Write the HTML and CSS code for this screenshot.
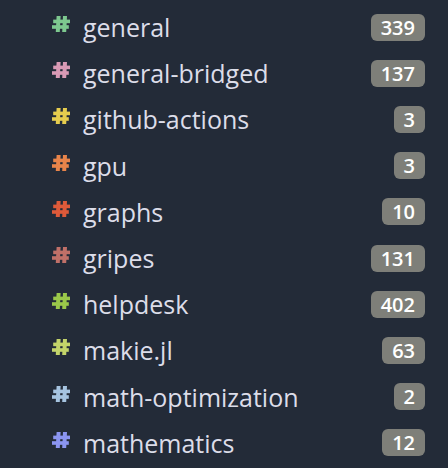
FILE: index.html
```html
<!DOCTYPE html>
<html>
<head>
<meta charset="utf-8">
<link rel="stylesheet" href="styles.css">
</head>
<body>
<ul class="channels">
  <li class="row"><svg class="hash c1" viewBox="0 0 18 16"><use href="#h"/></svg><span class="name">general</span><span class="badge">339</span></li>
  <li class="row"><svg class="hash c2" viewBox="0 0 18 16"><use href="#h"/></svg><span class="name">general-bridged</span><span class="badge">137</span></li>
  <li class="row"><svg class="hash c3" viewBox="0 0 18 16"><use href="#h"/></svg><span class="name">github-actions</span><span class="badge">3</span></li>
  <li class="row"><svg class="hash c4" viewBox="0 0 18 16"><use href="#h"/></svg><span class="name">gpu</span><span class="badge">3</span></li>
  <li class="row"><svg class="hash c5" viewBox="0 0 18 16"><use href="#h"/></svg><span class="name">graphs</span><span class="badge">10</span></li>
  <li class="row"><svg class="hash c6" viewBox="0 0 18 16"><use href="#h"/></svg><span class="name">gripes</span><span class="badge">131</span></li>
  <li class="row"><svg class="hash c7" viewBox="0 0 18 16"><use href="#h"/></svg><span class="name">helpdesk</span><span class="badge">402</span></li>
  <li class="row"><svg class="hash c8" viewBox="0 0 18 16"><use href="#h"/></svg><span class="name">makie.jl</span><span class="badge">63</span></li>
  <li class="row"><svg class="hash c9" viewBox="0 0 18 16"><use href="#h"/></svg><span class="name">math-optimization</span><span class="badge">2</span></li>
  <li class="row"><svg class="hash c10" viewBox="0 0 18 16"><use href="#h"/></svg><span class="name">mathematics</span><span class="badge">12</span></li>
</ul>
<svg class="defs" width="0" height="0">
  <defs>
    <g id="h" fill="currentColor">
      <polygon points="4.6,0 8.6,0 7.8,16 3.8,16"/>
      <polygon points="11,0 15,0 14.2,16 10.2,16"/>
      <rect x="1.2" y="3.6" width="16.8" height="3.6"/>
      <rect x="0" y="9.2" width="16.8" height="3.6"/>
    </g>
  </defs>
</svg>
</body>
</html>
```
FILE: styles.css
```css
html, body {
  margin: 0;
  padding: 0;
  background: #232b38;
  width: 448px;
  height: 468px;
  overflow: hidden;
}
.defs {
  position: absolute;
}
.channels {
  list-style: none;
  margin: 0;
  padding: 4px 23px 0 52px;
  font-family: "Open Sans", sans-serif;
}
.row {
  display: flex;
  align-items: center;
  height: 46.2px;
}
.hash {
  width: 18px;
  height: 16px;
  margin-right: 13px;
  margin-bottom: 6px;
  flex: none;
}
.name {
  flex: 1;
  color: #dcdde9;
  font-size: 25px;
  font-weight: 500;
  line-height: 1;
  margin-top: 1px;
}
.badge {
  background: #7e7f79;
  color: #ffffff;
  font-size: 20px;
  font-weight: 600;
  height: 27px;
  line-height: 27px;
  min-width: 8px;
  padding: 0 10px;
  border-radius: 6px;
  text-align: center;
}
.c1 { color: #7dc88f; }
.c2 { color: #d99ab5; }
.c3 { color: #e6cd4e; }
.c4 { color: #e8844a; }
.c5 { color: #de5a3a; }
.c6 { color: #c07068; }
.c7 { color: #9ac84a; }
.c8 { color: #c3d46a; }
.c9 { color: #a6c4e0; }
.c10 { color: #8b95f0; }
```
